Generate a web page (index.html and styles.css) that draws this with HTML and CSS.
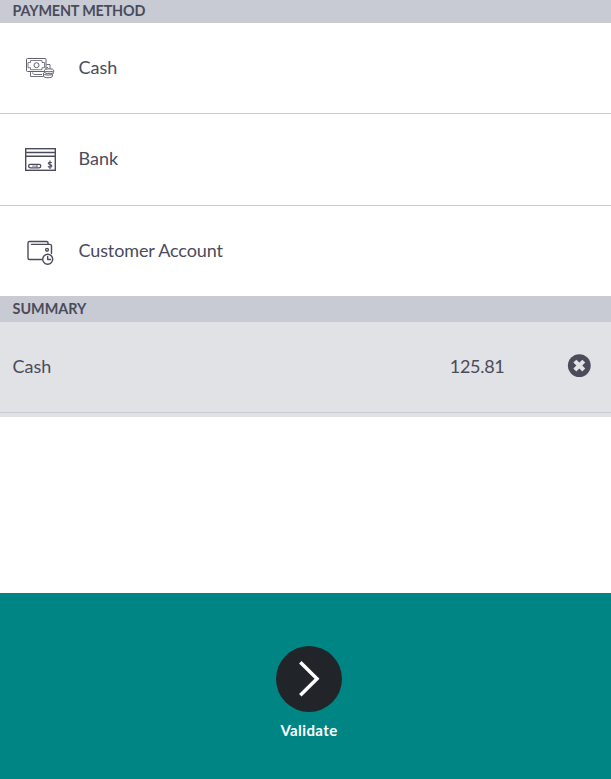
FILE: index.html
```html
<!DOCTYPE html>
<html lang="en">
<head>
<meta charset="utf-8">
<title>Payment</title>
<link rel="stylesheet" href="styles.css">
</head>
<body>
<main class="screen">
  <h2 class="heading heading-first">PAYMENT METHOD</h2>
  <div class="method">
    <svg class="icon" width="40" height="36" viewBox="0 0 40 36" fill="none" stroke="#60606f" stroke-width="1">
      <rect x="6.5" y="8.5" width="19.5" height="13" rx="1"/>
      <path d="M10.500 10.500h11.500v2h2.500v5.200h-2.500v2H10.500v-2h-2.500v-5.200h2.500z" stroke-width=".8"/>
      <circle cx="16.500" cy="15.200" r="2.500"/>
      <path d="M10.500 22v4.500h12.500M12.500 22.500c.2 1.200.9 2 2 2H22M26.500 14.500h3.500v4.500M26.500 17.500h1.500" stroke-width=".9"/>
      <g fill="#fff" stroke-width="1">
        <path d="M23.500 23v3c0 2.300 9 2.300 9 0v-3"/>
        <ellipse cx="28.300" cy="23.400" rx="4.900" ry="1.700"/>
        <path d="M24.500 20.400v1.600c0 2.200 9.200 2.200 9.200 0v-1.600"/>
        <ellipse cx="29" cy="20.300" rx="4.700" ry="1.500"/>
      </g>
    </svg>
    <span class="label">Cash</span>
  </div>
  <div class="method method-tall">
    <svg class="icon" width="40" height="37" viewBox="0 0 40 37" fill="none" stroke="#4b4b5a" stroke-width="1.400">
      <rect x="5.700" y="7.700" width="29.600" height="21.600"/>
      <path d="M5 11.500h31M5 15.200h31"/>
      <rect x="8.600" y="23.300" width="12.200" height="3.500" rx="1.700" stroke-width="1.300"/>
      <path d="M12 25.100h5.500M17 23.500v3" stroke-width=".7"/>
      <path d="M31.800 21.800c-.4-.8-3.600-1-3.600.5 0 1.700 3.700.9 3.700 2.700 0 1.700-3.500 1.400-3.900.3M30 19.500v8.500" stroke-width="1.100"/>
    </svg>
    <span class="label">Bank</span>
  </div>
  <div class="method method-last">
    <svg class="icon" width="40" height="36" viewBox="0 0 40 36" fill="none" stroke="#4b4b5a" stroke-width="1.400" stroke-linecap="round" stroke-linejoin="round">
      <path d="M22.500 26.500H9.500c-1 0-1.500-.5-1.500-1.500V10c0-1 .5-1.500 1.500-1.500h17.200c.9 0 1.300.5 1.300 1.300v1.300M11.500 11.400h18.300c1 0 1.700.6 1.700 1.600v7.500"/>
      <circle cx="27" cy="16.800" r="1.400"/>
      <circle cx="27.700" cy="26.300" r="5" fill="#fff"/>
      <path d="M27.700 23.400v3.100h2.800"/>
    </svg>
    <span class="label account">Customer Account</span>
  </div>
  <h2 class="heading">SUMMARY</h2>
  <section class="summary">
    <div class="line">
      <span>Cash</span>
      <span class="amount">125.81</span>
      <svg width="24" height="24" viewBox="0 0 24 24">
        <circle cx="12.300" cy="11.600" r="11.400" fill="#4a4b5b"/>
        <path d="M9.300 8.600l6 6M15.300 8.600l-6 6" stroke="#e0e2e6" stroke-width="4.200" stroke-linecap="square"/>
      </svg>
    </div>
  </section>
  <footer class="validate">
    <svg width="66" height="66" viewBox="0 0 66 66" fill="none">
      <circle cx="33" cy="33" r="33" fill="#212529"/>
      <path d="M24.300 16.200L41 32.700L24.300 49.200" stroke="#fff" stroke-width="3.500"/>
    </svg>
    <span>Validate</span>
  </footer>
</main>
</body>
</html>
```
FILE: styles.css
```css
* { box-sizing: border-box; }

body {
  margin: 0;
  background: #fff;
  color: #4a4b5b;
  font: 18px/27px Lato, sans-serif;
}

.screen {
  display: flex;
  flex-direction: column;
  height: 779px;
  overflow: hidden;
}

.heading {
  margin: 0;
  height: 26px;
  padding-left: 12.500px;
  background: #c8cbd3;
  font-size: 14.400px;
  font-weight: 700;
  line-height: 26px;
}

.heading-first {
  height: 23px;
  line-height: 22px;
  letter-spacing: -.18px;
}

.method {
  display: flex;
  align-items: center;
  height: 91px;
  padding-left: 20px;
  border-bottom: 1px solid #c8cbd3;
}

.method-tall { height: 92px; }

.method-last {
  height: 90px;
  border-bottom: 0;
}

.icon { margin-right: 18.500px; }

.label { padding-bottom: 2px; }

.account { letter-spacing: -.12px; }

.summary {
  height: 95px;
  background: #e0e2e6;
}

.line {
  display: flex;
  align-items: center;
  height: 91px;
  padding: 0 20px 2px 12.500px;
  border-bottom: 1px solid #c8cbd3;
}

.amount {
  margin: 0 62.500px 0 auto;
  letter-spacing: -.3px;
}

.validate {
  display: flex;
  flex-direction: column;
  align-items: center;
  height: 186px;
  margin-top: auto;
  padding: 53px 0 0 7px;
  background: #008585;
  color: #fff;
  font-size: 15px;
  font-weight: 700;
  line-height: 22px;
  letter-spacing: .4px;
}

.validate span { margin-top: 7px; }
```
